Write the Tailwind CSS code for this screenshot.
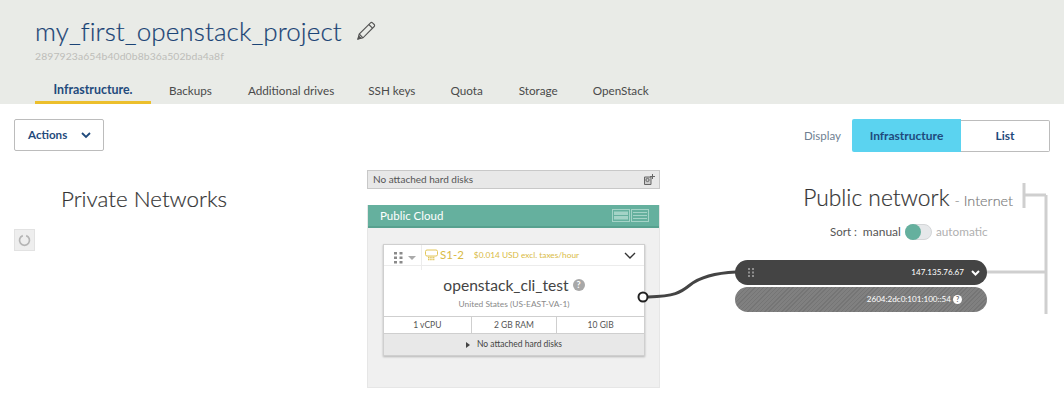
<!DOCTYPE html>
<html><head><meta charset="utf-8"><script src="https://cdn.jsdelivr.net/npm/@tailwindcss/browser@4"></script></head>
<body class="bg-white">
<div class="relative w-[1064px] h-[408px] overflow-hidden bg-white font-['Lato','Noto_Sans',sans-serif] text-[#333]">
  <header class="h-[104px] bg-[#e9ebe7] pl-[35px] flex flex-col">
    <div class="flex items-center h-[28px] mt-[17px] gap-[14px]">
      <h1 class="text-[26px] leading-[28px] font-light text-[#1a4375] tracking-[0.1px] [-webkit-text-stroke:0.2px_#1a4375]">my_first_openstack_project</h1>
      <svg width="20" height="20" viewBox="0 0 20 20" fill="none" stroke="#555" stroke-width="1.1"><path d="M2 18l1.2-5L14.5 1.8a1.4 1.4 0 0 1 2 0l1.7 1.7a1.4 1.4 0 0 1 0 2L7 16.8z"/><path d="M3.2 13l3.8 3.8M12.8 3.5l3.7 3.7"/><path d="M2 18l2.8-.9-1.9-1.9z" fill="#555"/></svg>
    </div>
    <div class="text-[10.4px] leading-[14px] mt-[4px] text-[#bdbdb9] tracking-[0.1px]">2897923a654b40d0b8b36a502bda4a8f</div>
    <nav class="flex mt-[13px] text-[11.7px] leading-[28px] text-[#4a4a4a] h-[28px]">
      <a class="w-[116px] text-center text-[12.4px] font-bold text-[#1f4a7c] border-b-[3px] border-[#ecbf2c] h-[28px]">Infrastructure.</a>
      <a class="ml-[18px]">Backups</a>
      <a class="ml-[36px]">Additional drives</a>
      <a class="ml-[34px]">SSH keys</a>
      <a class="ml-[35px]">Quota</a>
      <a class="ml-[36px]">Storage</a>
      <a class="ml-[35px]">OpenStack</a>
    </nav>
  </header>

  <div class="flex justify-between items-end px-[14px] h-[33px] mt-[15px]">
    <button class="self-start w-[90px] h-[32px] border border-[#bcbcbc] rounded-[2px] flex items-center pl-[13px] gap-[14px] text-[11.6px] font-bold text-[#1f4a7c]">
      <span>Actions</span>
      <svg width="10" height="7" viewBox="0 0 10 7" fill="none" stroke="#1f4a7c" stroke-width="1.8"><path d="M1 1l4 4 4-4"/></svg>
    </button>
    <div class="flex items-end">
      <span class="text-[11.5px] leading-[33px] text-[#6f7f92] mr-[11px]">Display</span>
      <div class="w-[109px] h-[33px] bg-[#5bd3f0] rounded-l-[2px] flex items-center justify-center text-[12px] font-bold text-[#1f4a7c]">Infrastructure</div>
      <div class="w-[89px] h-[32px] border border-[#bcbcbc] border-l-0 rounded-r-[2px] flex items-center justify-center text-[12px] font-bold text-[#1f4a7c]">List</div>
    </div>
  </div>

  <main class="flex mt-[18px]">
    <section class="w-[367px] pl-[14px] pt-[15px]">
      <h2 class="text-[22.4px] leading-[28px] font-light text-[#333] pl-[47px] [-webkit-text-stroke:0.2px_#333]">Private Networks</h2>
      <div class="w-[21px] h-[22px] mt-[16px] bg-[#eeeeee] border border-[#e2e2e2] flex items-center justify-center">
        <svg width="13" height="13" viewBox="0 0 13 13" fill="none" stroke="#b5b5b5" stroke-width="1.7"><path d="M4.8 1.6a5 5 0 1 0 3.4 0"/></svg>
      </div>
    </section>

    <section class="w-[293px]">
      <div class="h-[19px] bg-[#e8e8e8] border border-[#c8c8c8] flex items-center justify-between pl-[5px] pr-[4px] text-[10px] text-[#555]">
        <span>No attached hard disks</span>
        <svg width="12" height="12" viewBox="0 0 12 12" fill="none" stroke="#666" stroke-width="1"><path d="M1.5 3h6.5v7.5h-6.5z" fill="#ccc"/><circle cx="4.5" cy="6" r="1.6"/><path d="M9.5 0v5M7 2.5h5"/></svg>
      </div>
      <div class="mt-[16px] h-[183px] bg-[#f0f0f0] border border-[#e6e6e6] border-t-0">
        <div class="h-[23px] bg-[#65b09e] border-b-[2px] border-[#57a18f] flex items-center justify-between pl-[12px] pr-[10px] text-[11.5px] text-white">
          <span>Public Cloud</span>
          <div class="flex gap-[1px]">
            <svg width="18" height="13" viewBox="0 0 18 13"><rect x=".5" y=".5" width="17" height="12" fill="none" stroke="#a4d3c7"/><rect x="2" y="2.5" width="14" height="3.5" fill="#a4d3c7"/><rect x="2" y="7" width="14" height="3.5" fill="#a4d3c7"/></svg>
            <svg width="18" height="13" viewBox="0 0 18 13" fill="none" stroke="#a4d3c7"><rect x=".5" y=".5" width="17" height="12"/><path d="M2 3.5h14M2 6.5h14M2 9.5h14"/></svg>
          </div>
        </div>
        <div class="mt-[16px] ml-[15px] w-[262px] h-[112px] bg-white border border-[#cfcfcf] shadow-[0_1px_2px_rgba(0,0,0,0.25)] flex flex-col">
          <div class="h-[21px] flex items-center border-b border-[#ececec] shrink-0">
            <div class="w-[38px] h-[25px] self-start border-r border-[#ececec] flex items-center pl-[10px] gap-[5px] shrink-0">
              <svg width="9" height="12" viewBox="0 0 9 12" fill="#8a8a8a"><rect width="3" height="2.5"/><rect x="5.5" width="3" height="2.5"/><rect y="4.5" width="3" height="2.5"/><rect x="5.5" y="4.5" width="3" height="2.5"/><rect y="9" width="3" height="2.5"/><rect x="5.5" y="9" width="3" height="2.5"/></svg>
              <svg width="8" height="4" viewBox="0 0 8 4" fill="#aaa"><path d="M0 0h8L4 4z"/></svg>
            </div>
            <svg class="ml-[3px]" width="13" height="12" viewBox="0 0 13 12" fill="none" stroke="#e2c65a"><rect x=".5" y="1" width="12" height="6" rx="1.5"/><path d="M3 8.5h7M3 10.5h7" stroke-dasharray="1.5 .7" stroke-width="1.5"/></svg>
            <span class="ml-[2px] text-[11.5px] text-[#d9bb45]">S1-2</span>
            <span class="ml-[10px] text-[8.3px] text-[#d9bb45]">$0.014 USD excl. taxes/hour</span>
            <svg class="ml-auto mr-[8px]" width="12" height="7" viewBox="0 0 12 7" fill="none" stroke="#333" stroke-width="1.4"><path d="M1 1l5 5 5-5"/></svg>
          </div>
          <div class="flex-1 flex flex-col items-center pt-[9px]">
            <div class="flex items-center gap-[4px] text-[15.6px] leading-[20px] text-[#444]">openstack_cli_test<span class="w-[12px] h-[12px] rounded-full bg-[#a8a8a8] text-white text-[9px] leading-[12px] text-center font-bold">?</span></div>
            <div class="text-[8.4px] leading-[12px] mt-[3px] text-[#8a8a8a]">United States (US-EAST-VA-1)</div>
          </div>
          <div class="grid grid-cols-3 h-[18px] border-y border-[#cfcfcf] text-[8.5px] text-[#555] text-center leading-[16px] shrink-0">
            <div>1 vCPU</div><div class="border-x border-[#cfcfcf]">2 GB RAM</div><div>10 GIB</div>
          </div>
          <div class="h-[21px] bg-[#e8e8e8] flex items-center justify-center gap-[7px] text-[8.5px] text-[#444] shrink-0">
            <svg width="4" height="6" viewBox="0 0 4 6" fill="#444"><path d="M0 0l4 3-4 3z"/></svg>
            <span>No attached hard disks</span>
          </div>
        </div>
      </div>
    </section>

    <section class="flex-1 relative pl-[75px]">
      <div class="flex items-baseline justify-end w-[278px] absolute left-[75px] top-[11px] leading-[32px]">
        <span class="text-[22.8px] font-light text-[#333] [-webkit-text-stroke:0.2px_#333]">Public network</span>
        <span class="text-[14.4px] font-light text-[#777] ml-[5px] [-webkit-text-stroke:0.15px_#777]">- Internet</span>
      </div>
      <div class="flex items-center absolute left-[170px] top-[54px] text-[11.5px] h-[16px]">
        <span class="text-[#555]">Sort :</span>
        <span class="text-[#555] ml-[6px] text-[12px]">manual</span>
        <span class="relative w-[27px] h-[16px] ml-[4px] bg-[#e6e8ea] border border-[#d4d6d8] rounded-full"><span class="absolute left-[-1px] top-[-1px] w-[16px] h-[16px] rounded-full bg-[#65b09e]"></span></span>
        <span class="text-[#b0b0b0] ml-[4px] text-[11.8px]">automatic</span>
      </div>
      <div class="absolute left-[75px] top-[90px] flex flex-col gap-[2px] w-[252px]">
        <div class="h-[25px] rounded-full bg-[#444] flex items-center pl-[13px] pr-[4px] text-white text-[8.1px]">
          <svg width="6" height="9" viewBox="0 0 6 9" fill="#8f8f8f"><rect width="2" height="2"/><rect x="4" width="2" height="2"/><rect y="3.5" width="2" height="2"/><rect x="4" y="3.5" width="2" height="2"/><rect y="7" width="2" height="2"/><rect x="4" y="7" width="2" height="2"/></svg>
          <span class="ml-auto">147.135.76.67</span>
          <svg class="ml-[7px] mr-[3px]" width="9" height="6" viewBox="0 0 9 6" fill="none" stroke="#fff" stroke-width="2"><path d="M1 1l3.5 3.5L8 1"/></svg>
        </div>
        <div class="h-[25px] rounded-full bg-[repeating-linear-gradient(135deg,#808080_0,#808080_2px,#757575_2px,#757575_3px)] flex items-center justify-end pr-[25px] text-white text-[8.1px] gap-[2px]">
          <span>2604:2dc0:101:100::54</span>
          <span class="w-[9px] h-[9px] rounded-full bg-white text-[#666] text-[7px] leading-[9px] text-center font-bold">?</span>
        </div>
      </div>
    </section>
  </main>

  <svg class="absolute left-0 top-0 pointer-events-none" width="1064" height="408" fill="none">
    <path d="M648 297 C675 296 680 293 690 285 C700 277 715 273 736 272" stroke="#444" stroke-width="3"/>
    <circle cx="643" cy="297" r="4.5" fill="#fff" stroke="#222" stroke-width="2"/>
    <path d="M1024 183v25M1024 195h22M1046 195v119M987 272h59" stroke="#cfcfcf" stroke-width="3"/>
  </svg>
</div>
</body></html>
